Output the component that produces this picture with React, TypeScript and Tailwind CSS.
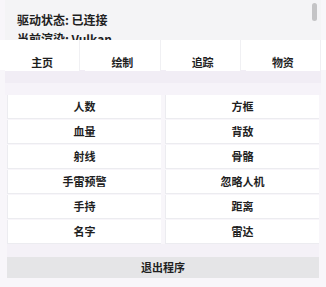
import React from "react";

const tabs = ["主页", "绘制", "追踪", "物资"];
const items = [
  ["人数", "方框"],
  ["血量", "背敌"],
  ["射线", "骨骼"],
  ["手雷预警", "忽略人机"],
  ["手持", "距离"],
  ["名字", "雷达"],
];

export default function App() {
  return (
    <div
      className="w-[326px] h-[287px] overflow-hidden bg-[#f8f6fa] text-[#1f1f1f]"
      style={{ fontFamily: '"Noto Sans CJK SC", "Noto Sans", sans-serif' }}
    >
      <div className="relative mx-[5px] h-[40px] overflow-hidden bg-[#f4f4f6] pl-[12px] pt-[10px]">
        <div className="text-[12px] font-bold leading-[19px]">驱动状态: 已连接</div>
        <div className="text-[12px] font-bold leading-[19px]">当前渲染: Vulkan</div>
        <div className="absolute right-[4px] top-[3px] h-[18px] w-[5px] rounded-full bg-[#c4c4c6]" />
      </div>
      <div className="grid h-[30px] grid-cols-4 gap-[5px] bg-white px-[5px]">
        {tabs.map((t) => (
          <div
            key={t}
            className="flex items-center justify-center border-r border-[#f0f0f3] bg-white pt-[14px] text-[11px] font-bold"
          >
            {t}
          </div>
        ))}
      </div>
      <div className="mx-[5px] h-[13px] bg-[#f1edf5]" />
      <div className="mx-[5px] h-[12px] bg-[#f6f3f9]" />
      <div className="grid grid-cols-2 gap-x-[4px] gap-y-[1px] px-[7px]">
        {items.map(([a, b]) => (
          <React.Fragment key={a}>
            <div className="flex h-[24px] items-center justify-center border-l border-b border-[#ececf0] bg-white text-[11px] font-bold">
              {a}
            </div>
            <div className="flex h-[24px] items-center justify-center border-l border-b border-[#ececf0] bg-white text-[11px] font-bold">
              {b}
            </div>
          </React.Fragment>
        ))}
      </div>
      <div className="mx-[7px] h-[13px] bg-[#f4f1f7]" />
      <div className="mx-[7px] flex h-[21px] items-center justify-center bg-[#e5e5e7] text-[11px] font-bold">
        退出程序
      </div>
    </div>
  );
}
